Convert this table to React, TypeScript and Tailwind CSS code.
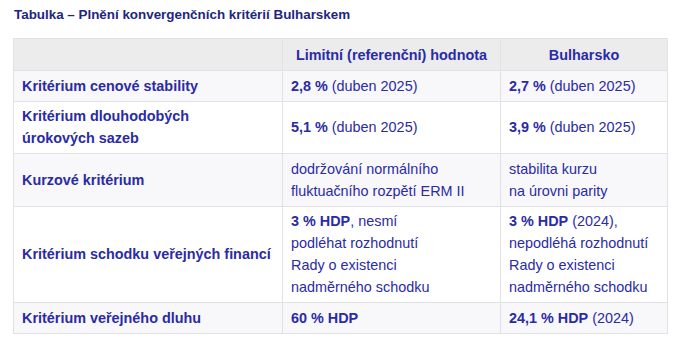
function B({ children }: { children: React.ReactNode }) {
  return <b className="font-bold">{children}</b>
}

const data = [
  {
    label: 'Kritérium cenové stability',
    limit: (
      <>
        <B>2,8 %</B> (duben 2025)
      </>
    ),
    bg: (
      <>
        <B>2,7 %</B> (duben 2025)
      </>
    ),
    shade: true,
  },
  {
    label: (
      <>
        Kritérium dlouhodobých
        <br />
        úrokových sazeb
      </>
    ),
    limit: (
      <>
        <B>5,1 %</B> (duben 2025)
      </>
    ),
    bg: (
      <>
        <B>3,9 %</B> (duben 2025)
      </>
    ),
    shade: false,
  },
  {
    label: 'Kurzové kritérium',
    limit: (
      <>
        dodržování normálního
        <br />
        fluktuačního rozpětí ERM II
      </>
    ),
    bg: (
      <>
        stabilita kurzu
        <br />
        na úrovni parity
      </>
    ),
    shade: true,
  },
  {
    label: 'Kritérium schodku veřejných financí',
    limit: (
      <>
        <B>3 % HDP</B>, nesmí
        <br />
        podléhat rozhodnutí
        <br />
        Rady o existenci
        <br />
        nadměrného schodku
      </>
    ),
    bg: (
      <>
        <B>3 % HDP</B> (2024),
        <br />
        nepodléhá rozhodnutí
        <br />
        Rady o existenci
        <br />
        nadměrného schodku
      </>
    ),
    shade: false,
  },
  {
    label: 'Kritérium veřejného dluhu',
    limit: <B>60 % HDP</B>,
    bg: (
      <>
        <B>24,1 % HDP</B> (2024)
      </>
    ),
    shade: true,
  },
]

export default function App() {
  return (
    <div
      className="w-[674px] h-[341px] bg-white pt-[6px] pl-[14px]"
      style={{ fontFamily: '"Liberation Sans", Arial, sans-serif' }}
    >
      <h1 className="text-[13.4px] font-bold text-[#1e2680] leading-[18px]">
        Tabulka – Plnění konvergenčních kritérií Bulharskem
      </h1>
      <table className="mt-[14px] -ml-px w-[654px] table-fixed border-collapse border border-[#e2e2e4] text-[14.4px] leading-[22px] text-[#2a2ba6]">
        <colgroup>
          <col className="w-[269px]" />
          <col className="w-[218px]" />
          <col className="w-[167px]" />
        </colgroup>
        <thead>
          <tr className="bg-[#ececec] h-[32px]">
            <th className="border border-[#e2e2e4] px-2 py-1"></th>
            <th className="border border-[#e2e2e4] px-2 py-1 text-center font-bold">
              Limitní (referenční) hodnota
            </th>
            <th className="border border-[#e2e2e4] px-2 py-1 text-center font-bold">Bulharsko</th>
          </tr>
        </thead>
        <tbody>
          {data.map((r, i) => (
            <tr key={i} className={r.shade ? 'bg-[#f8f7f9]' : 'bg-white'}>
              <td className="border border-[#e2e2e4] px-2 py-[3.75px] align-middle font-bold">{r.label}</td>
              <td className="border border-[#e2e2e4] px-2 py-[3.75px] align-middle">{r.limit}</td>
              <td className="border border-[#e2e2e4] px-2 py-[3.75px] align-middle">{r.bg}</td>
            </tr>
          ))}
        </tbody>
      </table>
    </div>
  )
}
